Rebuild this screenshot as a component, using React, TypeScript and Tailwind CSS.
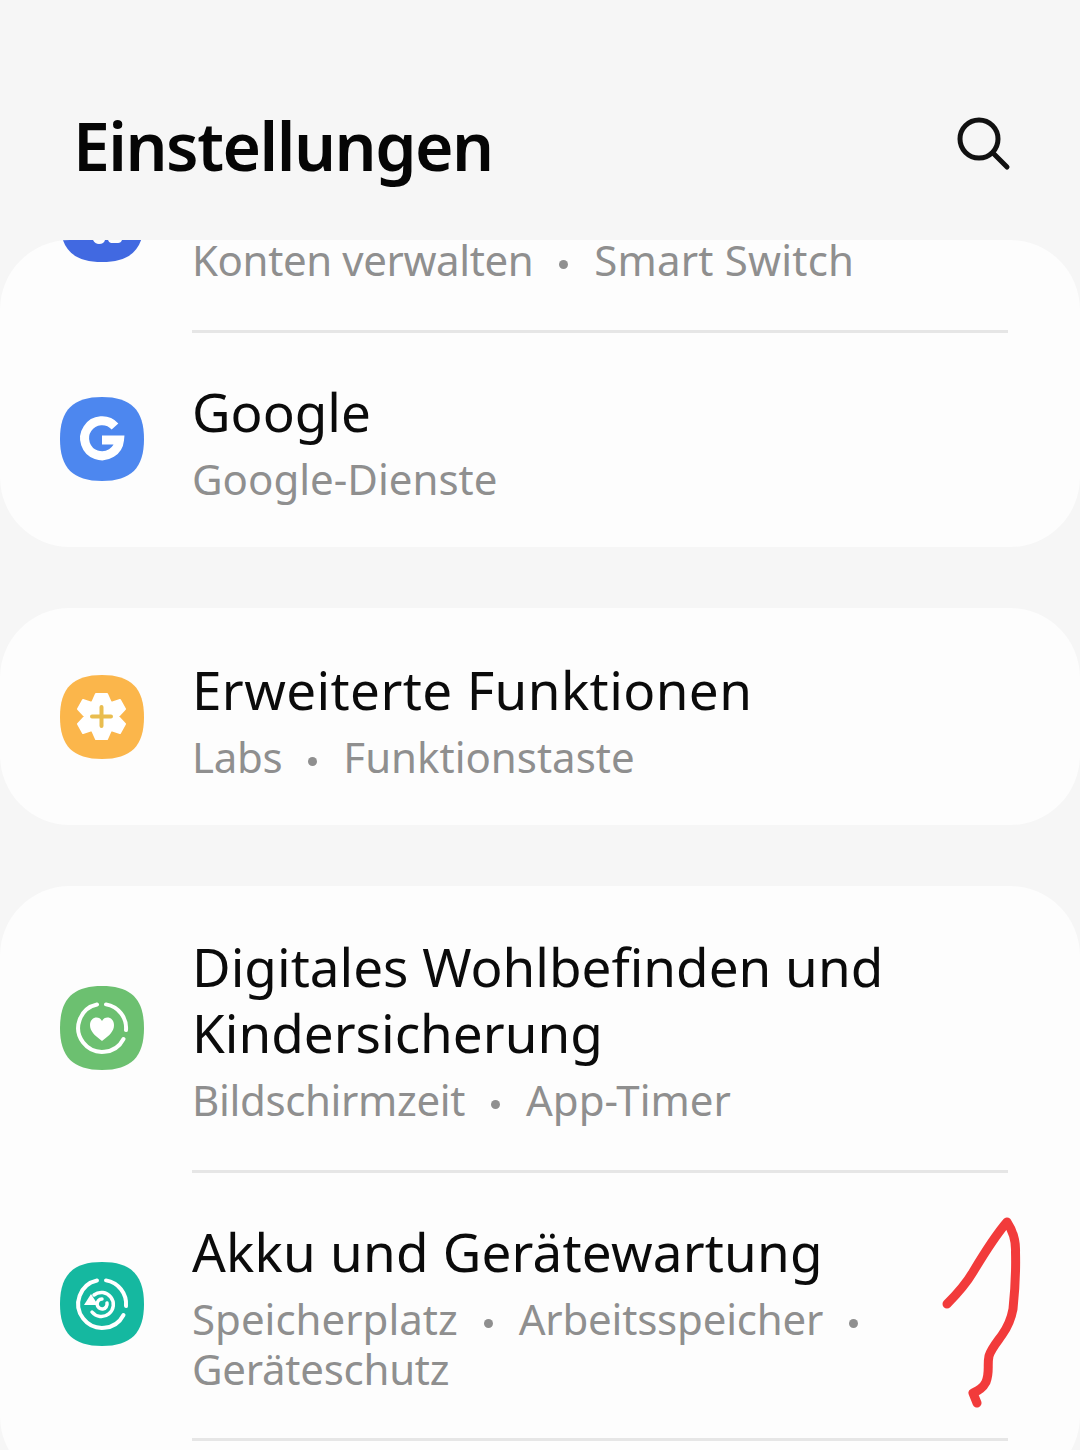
import type { ReactNode } from 'react'

const SQUIRCLE = 'M42 0C71 0 84 13 84 42C84 71 71 84 42 84C13 84 0 71 0 42C0 13 13 0 42 0Z'

function AppIcon({ color, children }: { color: string; children?: ReactNode }) {
  return (
    <svg width="84" height="84" viewBox="0 0 84 84" className="shrink-0">
      <path d={SQUIRCLE} fill={color} />
      {children}
    </svg>
  )
}

function Ring() {
  return (
    <g fill="none" stroke="#fff" strokeWidth="4" strokeLinecap="round">
      <path d="M46 18.4A24 24 0 0 1 66 44" />
      <path d="M63.5 53A24 24 0 1 1 37 18.5" />
    </g>
  )
}

function Dot() {
  return <span className="mx-[26px] inline-block h-[9px] w-[9px] rounded-full bg-[#8f8f8f] align-middle" />
}

function Row({ icon, title, children, box, top }: { icon: ReactNode; title: ReactNode; children: ReactNode; box: string; top: string }) {
  return (
    <div className={`flex items-center pl-[60px] pr-[72px] ${box}`}>
      {icon}
      <div className={`ml-[48px] w-[815px] self-start ${top}`}>
        <div className="text-[53px] leading-[66px] text-[#0b0b0b]">{title}</div>
        <div className="mt-[9px] text-[42px] leading-[50px] text-[#8f8f8f]">{children}</div>
      </div>
    </div>
  )
}

function Divider() {
  return <div className="ml-[192px] mr-[72px] h-[3px] bg-[#e6e6e6]" />
}

export default function App() {
  return (
    <div className="relative h-[1450px] w-[1080px] overflow-hidden bg-[#f6f6f6] font-['Noto_Sans',sans-serif]">
      <div className="flex h-[240px] items-start justify-between pl-[73px] pr-[68px]">
        <h1 className="mt-[99px] text-[66px] font-semibold leading-[92px] tracking-[-1.5px] text-[#050505]">Einstellungen</h1>
        <svg width="56" height="56" viewBox="0 0 56 56" className="mt-[116px]" fill="none" stroke="#111" strokeWidth="5" strokeLinecap="round">
          <circle cx="23" cy="23" r="19" />
          <path d="M37 37L51 51" />
        </svg>
      </div>

      <div className="h-[307px] overflow-hidden rounded-[70px] bg-[#fdfdfd]">
        <div className="flex h-[90px] items-start pl-[60px]">
          <div className="-mt-[62px]">
            <AppIcon color="#4169e1">
              <path d="M32 54H63V62H62Q61 65 58 65H51Q49 65 48 62H45Q44 66 39 66Q35 66 33 62H32Z" fill="#fdfdfd" />
            </AppIcon>
          </div>
          <div className="-mt-[5px] ml-[48px] text-[42px] leading-[50px] text-[#8f8f8f]">
            <span className="tracking-[-0.4px]">Konten verwalten</span>
            <Dot />
            <span className="tracking-[0.2px]">Smart Switch</span>
          </div>
        </div>
        <Divider />
        <Row
          box="h-[212px]"
          top="pt-[46px]"
          title="Google"
          icon={
            <AppIcon color="#4d87ef">
              <path d="M55 29.5A17.5 17.5 0 1 0 59.5 43H42" fill="none" stroke="#fff" strokeWidth="9" />
            </AppIcon>
          }
        >
          Google-Dienste
        </Row>
      </div>

      <div className="mt-[61px] rounded-[70px] bg-[#fdfdfd]">
        <Row
          box="h-[217px]"
          top="pt-[49px]"
          title={<span className="tracking-[0.4px]">Erweiterte Funktionen</span>}
          icon={
            <AppIcon color="#fbb64b">
              <path
                d="M36 19H47L51 28L60 25L65 34L58 41.5L65 49L60 58L51 55L47 64H36L32 55L23 58L18 49L25 41.5L18 34L23 25L32 28Z"
                fill="#fff"
                stroke="#fff"
                strokeWidth="2"
                strokeLinejoin="round"
              />
              <path d="M41.5 32V51M32 41.5H51" stroke="#e9bd4f" strokeWidth="4" strokeLinecap="round" />
            </AppIcon>
          }
        >
          <span className="tracking-[-0.3px]">Labs</span>
          <Dot />
          Funktionstaste
        </Row>
      </div>

      <div className="mt-[61px] h-[600px] rounded-[70px] bg-[#fdfdfd]">
        <Row
          box="h-[284px]"
          top="pt-[48px]"
          title="Digitales Wohlbefinden und Kindersicherung"
          icon={
            <AppIcon color="#6cc070">
              <Ring />
              <path d="M42 55C34 49 30 45 30 39C30 31 39 29 42 35C45 29 54 31 54 39C54 45 50 49 42 55Z" fill="#fff" />
            </AppIcon>
          }
        >
          <span className="tracking-[-0.35px]">Bildschirmzeit</span>
          <Dot />
          App-Timer
        </Row>
        <Divider />
        <Row
          box="h-[265px] pb-[3px]"
          top="pt-[46px]"
          title={<span className="tracking-[0.2px]">Akku und Gerätewartung</span>}
          icon={
            <AppIcon color="#15b8a0">
              <Ring />
              <g fill="none" stroke="#fff" strokeWidth="3.5" strokeLinecap="round">
                <path d="M34 33A12 12 0 1 1 32 50" />
                <path d="M47 41A5 5 0 1 1 42 37" />
              </g>
              <path d="M24 43L31 32L38 43Z" fill="#fff" />
            </AppIcon>
          }
        >
          Speicherplatz
          <Dot />
          <span className="tracking-[-0.2px]">Arbeitsspeicher</span>
          <Dot />
          <span className="tracking-[-0.25px]">Geräteschutz</span>
        </Row>
        <Divider />
      </div>

      <svg width="1080" height="1450" viewBox="0 0 1080 1450" className="pointer-events-none absolute left-0 top-0" fill="none">
        <path
          d="M947 1304C956 1295 966 1284 973 1272C982 1257 995 1236 1007 1222C1013 1231 1016 1240 1015.5 1252C1016 1270 1015 1290 1013 1309C1011 1320 1007 1328 1002 1335C997 1342 991 1349 989 1356C987 1365 990 1372 986 1382C983 1388 979 1390 973 1393L977 1403"
          stroke="#f23b3b"
          strokeWidth="9"
          strokeLinecap="round"
          strokeLinejoin="round"
        />
      </svg>
    </div>
  )
}
